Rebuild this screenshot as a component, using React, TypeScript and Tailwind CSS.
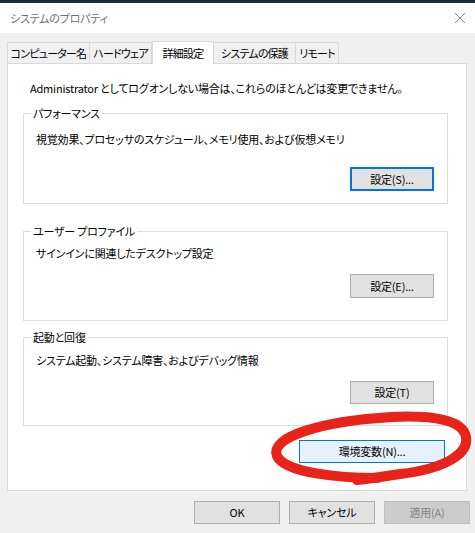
import React from "react";

const font = "font-['Noto_Sans_CJK_JP',sans-serif] [font-feature-settings:'palt'] tracking-[-0.2px]";

const tabs = [
  { label: "コンピューター名", w: "w-[83px]" },
  { label: "ハードウェア", w: "w-[63px]" },
  { label: "詳細設定", w: "w-[62px]", active: true },
  { label: "システムの保護", w: "w-[83px]" },
  { label: "リモート", w: "w-[44px]" },
];

function WinButton({
  children,
  className = "",
  variant = "normal",
}: {
  children: React.ReactNode;
  className?: string;
  variant?: "normal" | "focus" | "hover" | "disabled";
}) {
  const styles = {
    normal: "border border-[#adadad] bg-[#e1e1e1] text-black",
    focus: "border-2 border-[#0078d7] bg-[#e1e1e1] text-black",
    hover: "border border-[#0078d7] bg-[#e5f1fb] text-black",
    disabled: "border border-[#bfbfbf] bg-[#cccccc] text-[#838383]",
  }[variant];
  return (
    <div className={`flex items-center justify-center text-[11px] ${styles} ${className}`}>
      {children}
    </div>
  );
}

function Group({
  title,
  desc,
  button,
  variant,
  className,
  descGap,
  btnGap,
  bottom,
  btnH,
}: {
  title: string;
  desc: string;
  button: string;
  variant?: "normal" | "focus";
  className: string;
  descGap: string;
  btnGap: string;
  bottom: string;
  btnH: string;
}) {
  return (
    <fieldset className={`ml-[15px] mr-[18px] border border-[#dcdcdc] ${className}`}>
      <legend className="ml-[7px] px-[2px] text-[11px] leading-[16px]">{title}</legend>
      <p className={`pl-[12px] text-[11px] leading-[16px] ${descGap}`}>{desc}</p>
      <div className={`flex justify-end pr-[13px] ${btnGap} ${bottom}`}>
        <WinButton variant={variant} className={`w-[84px] ${btnH}`}>
          {button}
        </WinButton>
      </div>
    </fieldset>
  );
}

export default function App() {
  return (
    <div className={`relative h-[533px] w-[475px] overflow-hidden bg-[#f0f0f0] text-black ${font}`}>
      <div className="h-[3px] bg-[#1c2a3c]" />
      <div className="flex h-[30px] items-center justify-between bg-white pl-[10px] pr-[8px]">
        <span className="text-[11px] text-[#707070]">システムのプロパティ</span>
        <svg width="12" height="12" viewBox="0 0 12 12" className="mr-[1px]">
          <path d="M1 1 L11 11 M11 1 L1 11" stroke="#8c8c8c" strokeWidth="1" />
        </svg>
      </div>

      <div className="px-[7px] pt-[8px]">
        <div className="flex h-[22px] items-end">
          {tabs.map((t) =>
            t.active ? (
              <div
                key={t.label}
                className={`${t.w} relative z-10 -mb-px flex h-[23px] items-center justify-center whitespace-nowrap border border-b-0 border-[#d9d9d9] bg-white text-[11px] tracking-[-0.8px]`}
              >
                {t.label}
              </div>
            ) : (
              <div
                key={t.label}
                className={`${t.w} -ml-px flex h-[21px] items-center justify-center whitespace-nowrap border border-b-0 border-[#d9d9d9] bg-[#f0f0f0] text-[11px] tracking-[-0.8px] first:ml-0`}
              >
                {t.label}
              </div>
            ),
          )}
        </div>

        <div className="h-[428px] w-[460px] border border-[#d9d9d9] bg-white">
          <p className="pl-[22px] pt-[16px] text-[11px] leading-[16px]">
            Administrator としてログオンしない場合は、これらのほとんどは変更できません。
          </p>

          <Group
            title="パフォーマンス"
            desc="視覚効果、プロセッサのスケジュール、メモリ使用、および仮想メモリ"
            button="設定(S)..."
            variant="focus"
            className="mt-[9px]"
            descGap="mt-[10px]"
            btnGap="mt-[20px]"
            bottom="pb-[12px]"
            btnH="h-[24px]"
          />
          <Group
            title="ユーザー プロファイル"
            desc="サインインに関連したデスクトップ設定"
            button="設定(E)..."
            className="mt-[19px]"
            descGap="mt-[6px]"
            btnGap="mt-[13px]"
            bottom="pb-[22px]"
            btnH="h-[24px]"
          />
          <Group
            title="起動と回復"
            desc="システム起動、システム障害、およびデバッグ情報"
            button="設定(T)"
            className="mt-[8px]"
            descGap="mt-[7px]"
            btnGap="mt-[13px]"
            bottom="pb-[21px]"
            btnH="h-[23px]"
          />

          <div className="mt-[14px] flex justify-end pr-[21px]">
            <WinButton variant="hover" className="h-[23px] w-[146px]">
              環境変数(N)...
            </WinButton>
          </div>
        </div>
      </div>

      <div className="mt-[10px] flex justify-end gap-[9px] pr-[5px]">
        <WinButton className="h-[23px] w-[86px]">OK</WinButton>
        <WinButton className="h-[23px] w-[86px]">キャンセル</WinButton>
        <WinButton variant="disabled" className="h-[23px] w-[86px]">
          適用(A)
        </WinButton>
      </div>

      {/* hand-drawn highlight around the env button */}
      <svg className="pointer-events-none absolute left-0 top-0" width="475" height="533">
        <path
          d="M378 478 C340 478 285 473 277 456 C269 437 322 421 392 417 C434 415 463 420 466 437 C469 454 444 469 400 474 C385 476 370 479 357 480"
          fill="none"
          stroke="#e8231a"
          strokeWidth="10"
          strokeLinecap="round"
        />
      </svg>
    </div>
  );
}
